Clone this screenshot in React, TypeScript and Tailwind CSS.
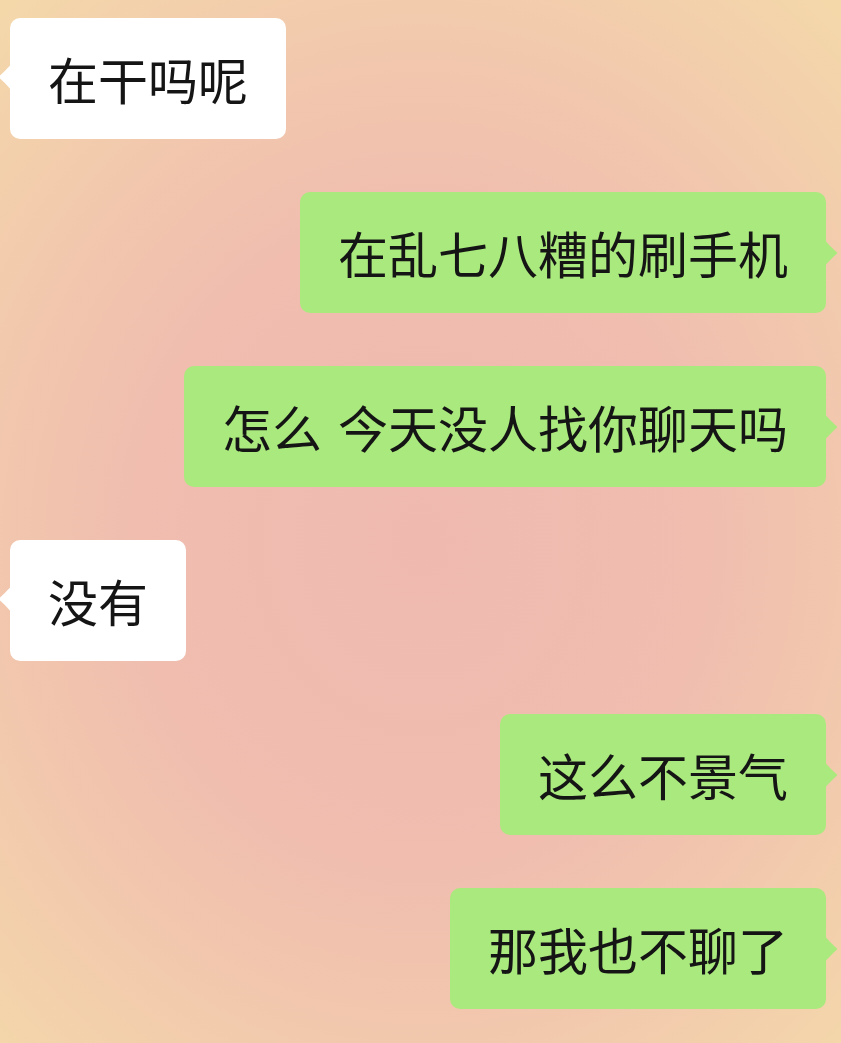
const messages = [
  { side: "left", text: "在干吗呢" },
  { side: "right", text: "在乱七八糟的刷手机" },
  { side: "right", text: "怎么 今天没人找你聊天吗" },
  { side: "left", text: "没有" },
  { side: "right", text: "这么不景气" },
  { side: "right", text: "那我也不聊了" },
];

const Tail = ({ side, color }: { side: string; color: string }) => (
  <svg
    width="14"
    height="28"
    viewBox="0 0 14 28"
    className={
      side === "left"
        ? "absolute left-[-12px] top-1/2 -translate-y-1/2 -mt-[2px]"
        : "absolute right-[-12px] top-1/2 -translate-y-1/2 scale-x-[-1]"
    }
  >
    <path d="M14 0 L14 28 C11 24 5 18 1.5 15 Q0 14 1.5 13 C5 10 11 4 14 0 Z" fill={color} />
  </svg>
);

const Bubble = ({ side, text }: { side: string; text: string }) => {
  const left = side === "left";
  const parts = text.split(" ");
  return (
    <div className={`flex w-full ${left ? "justify-start pl-[10px]" : "justify-end pr-[15px]"}`}>
      <div
        className={`relative flex items-center h-[121px] px-[38px] rounded-[10px] text-[50px] leading-none text-[#151515] whitespace-pre ${
          left ? "bg-white" : "bg-[#aae97d]"
        }`}
      >
        <Tail side={side} color={left ? "#ffffff" : "#aae97d"} />
        <span className="-mt-[2px]">
          {parts.map((p, i) => (
            <span key={i}>
              {i > 0 && <span className="inline-block w-[16px]"> </span>}
              {p}
            </span>
          ))}
        </span>
      </div>
    </div>
  );
};

export default function App() {
  return (
    <div
      className="w-[841px] h-[1043px] overflow-hidden flex flex-col gap-[53px] pt-[18px] bg-[radial-gradient(ellipse_75%_68%_at_50%_52%,#efb9b0_0%,#f0bdaf_45%,#f2c9ad_72%,#f4d8aa_100%)]"
      style={{ fontFamily: '"Noto Sans CJK SC", "Noto Sans", sans-serif' }}
    >
      {messages.map((m, i) => (
        <Bubble key={i} side={m.side} text={m.text} />
      ))}
    </div>
  );
}
